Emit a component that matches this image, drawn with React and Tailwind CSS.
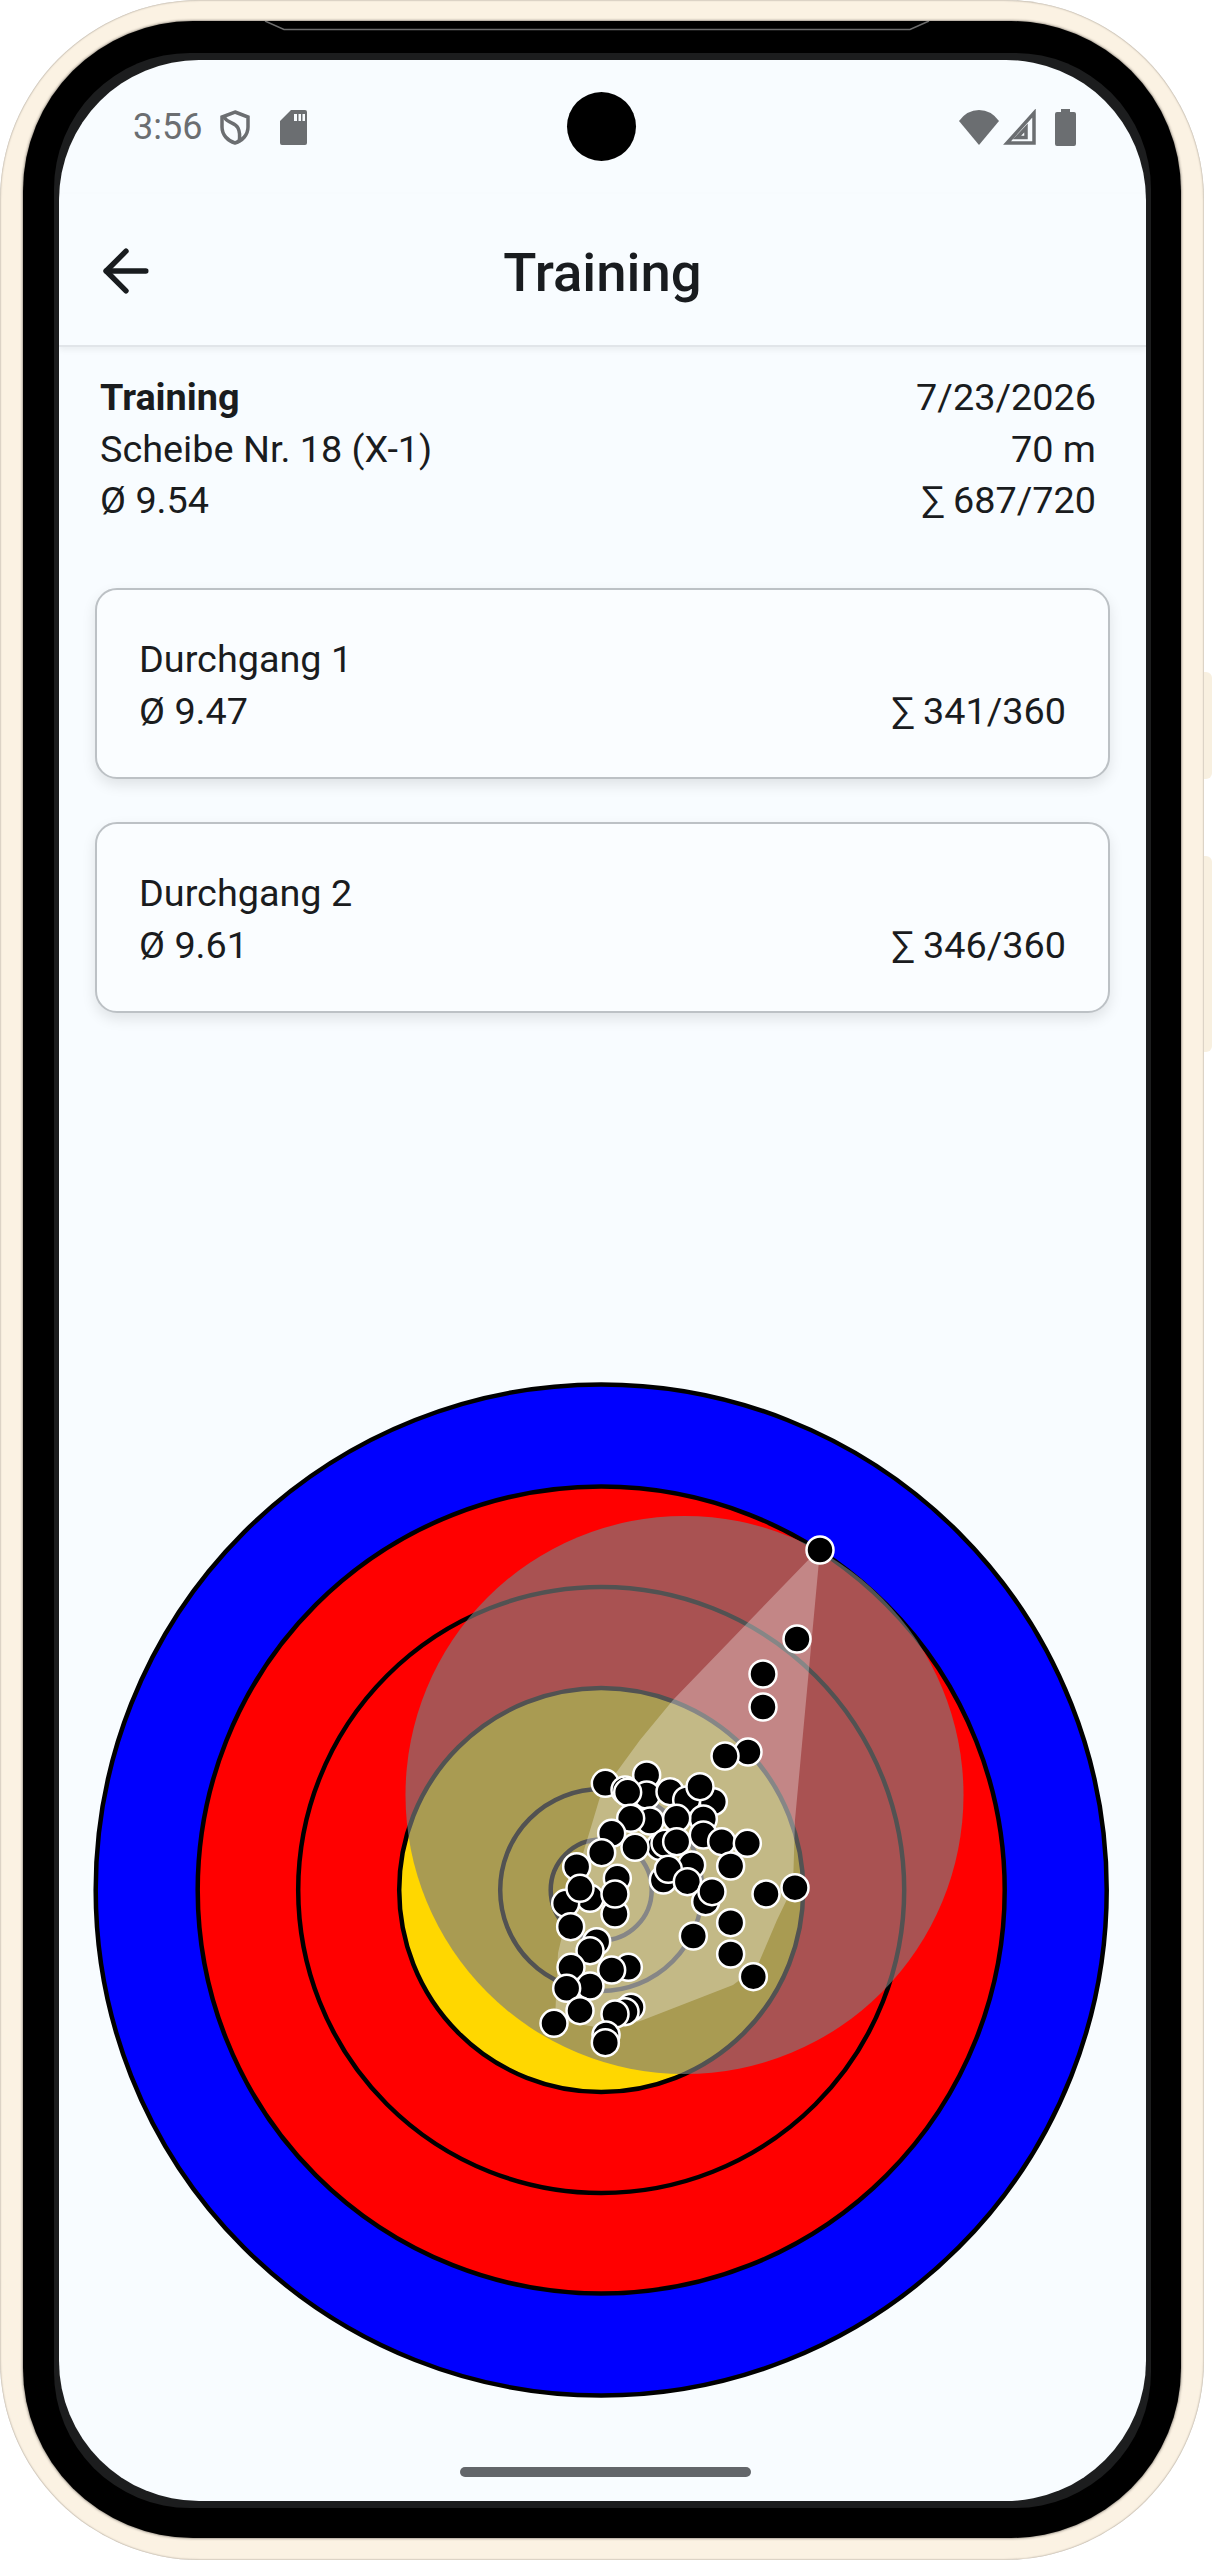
// Training result screen inside a phone frame, with the shot scatter on a target.
import { ArrowLeft } from 'lucide-react';

// Ring radii, outermost first, and the fill of each ring.
const RINGS = [
  { r: 505.5, fill: '#0000ff' },
  { r: 403.5, fill: '#ff0000' },
  { r: 303, fill: '#ff0000' },
  { r: 202, fill: '#ffd700' },
  { r: 101, fill: '#ffd700' },
  { r: 50.5, fill: '#ffd700' },
];

const HULL = '820,1550 795,1820 793,1887 777,1920 757,1967 733,1985 643,2020 613,2030 555,2020 558,1953 577,1873 588,1837 600,1797 613,1777 640,1740 673,1700 815,1553';

// Shots outside the tight group, in page pixels.
const OUTER_SHOTS = [
  [820, 1550], [797, 1639], [763, 1674], [763, 1707], [748, 1752], [725, 1756],
];

// Tight group, read off a 3x crop whose corner sits at 500,1740.
const GROUP_SHOTS = [
  [316, 130], [440, 105], [440, 165], [375, 150], [383, 157], [510, 155], [640, 185], [560, 180], [600, 140],
  [450, 243], [392, 235], [610, 237], [530, 235], [335, 280], [480, 320], [495, 310], [610, 285], [530, 305],
  [405, 322], [665, 305], [742, 310], [305, 338], [575, 375], [692, 378], [490, 420], [505, 388], [562, 425],
  [617, 485], [636, 455], [230, 380], [352, 415], [270, 475], [197, 490], [345, 522], [345, 462], [240, 445],
  [212, 560], [798, 462], [885, 443], [692, 548], [580, 588], [692, 642], [760, 710], [290, 605], [270, 632],
  [213, 682], [385, 682], [335, 690], [270, 738], [200, 745], [240, 812], [393, 802], [375, 815], [345, 822],
  [162, 850], [318, 885], [316, 908],
].map(([x, y]) => [500 + x / 3, 1740 + y / 3]);

function Target() {
  return (
    <svg className="ml-[28px] mt-[362px] block" width="1030" height="1030" viewBox="87 1375 1030 1030">
      {RINGS.map((ring) => (
        <circle key={ring.r} cx="601.2" cy="1890" r={ring.r} fill={ring.fill} stroke="#000" strokeWidth="4.5" />
      ))}
      <circle cx="684.5" cy="1795" r="279" fill="rgb(125 125 125 / 0.66)" />
      <polygon points={HULL} fill="rgb(255 255 255 / 0.3)" strokeLinejoin="round" />
      {[...OUTER_SHOTS, ...GROUP_SHOTS].map(([x, y], i) => (
        <circle key={i} cx={x} cy={y} r="13.5" fill="#000" stroke="#fff" strokeWidth="2.5" />
      ))}
    </svg>
  );
}

function StatusBar() {
  return (
    <div className="relative flex h-[134px] shrink-0 items-center pl-[74px] pr-[70px] text-[#6b6e71]">
      <span className="w-[87px] text-[36px] leading-none">3:56</span>
      <svg width="30" height="35" viewBox="0 0 30 35" fill="none" stroke="currentColor" strokeWidth="3.5">
        <path d="M15 2 L28 7 V17 C28 25 22 31 15 33 C8 31 2 25 2 17 V7 Z" />
        <path d="M4 7 C8 14 15 12 18 18 C20 22 20 27 19 32" />
      </svg>
      <svg className="ml-[30px]" width="27" height="35" viewBox="0 0 27 35">
        <path fill="currentColor" fillRule="evenodd" d="M11 0 H25 Q27 0 27 2 V33 Q27 35 25 35 H2 Q0 35 0 33 V11 Z M14 4 V11 H17 V4 Z M18.5 4 V11 H21 V4 Z M22.5 4 V11 H25 V4 Z" />
      </svg>
      <div className="absolute left-[508px] top-[32px] h-[69px] w-[69px] rounded-full bg-black" />
      <div className="ml-auto flex items-center">
        <svg width="40" height="35" viewBox="0 0 40 35">
          <path fill="currentColor" d="M20 35 L0 11 Q8 0 20 0 Q32 0 40 11 Z" />
        </svg>
        <svg className="ml-[4px]" width="33" height="36" viewBox="0 0 33 36" fill="none" stroke="currentColor">
          <path d="M31 4 V34 H4 Z M23 19 V28.5 H14 Z" strokeWidth="3.5" />
        </svg>
        <svg className="ml-[19px]" width="21" height="37" viewBox="0 0 21 37">
          <path fill="currentColor" d="M6 0 H15 V3 H19 Q21 3 21 5 V35 Q21 37 19 37 H2 Q0 37 0 35 V5 Q0 3 2 3 H6 Z" />
        </svg>
      </div>
    </div>
  );
}

function Header() {
  return (
    <div className="relative flex h-[153px] shrink-0 items-center justify-center border-b-2 border-[#e1e5e9] pt-[5px] text-[#191c1f] shadow-[0_3px_6px_rgba(0,0,0,0.06)]">
      <ArrowLeft className="absolute left-[33px] top-[43px]" size={68} strokeWidth={1.9} />
      <span className="text-[54.5px] font-medium leading-none">Training</span>
    </div>
  );
}

function RunCard({ name, average, sum }) {
  return (
    <div className="flex h-[191px] flex-col justify-center rounded-[22px] border-2 border-[#bcc1c5] bg-[#fafdff] px-[42px] pt-[5px] leading-[51.5px] shadow-[0_6px_14px_rgba(0,0,0,0.1)]">
      <div>{name}</div>
      <div className="flex justify-between">
        <span>{average}</span>
        <span>{sum}</span>
      </div>
    </div>
  );
}

export default function App() {
  return (
    <div className="relative h-[2560px] w-[1212px] bg-white font-['Roboto',sans-serif]">
      <div className="absolute right-0 top-[672px] h-[107px] w-[16px] rounded-r-[6px] bg-[#f8f0e0]" />
      <div className="absolute right-0 top-[856px] h-[196px] w-[16px] rounded-r-[6px] bg-[#f8f0e0]" />

      <div className="relative h-[2560px] w-[1204px] rounded-[200px] bg-[#fbf2e3] px-[23px] pb-[22px] pt-[21px] shadow-[inset_0_0_2px_rgba(90,80,70,0.7)]">
        <div className="relative h-full rounded-[170px] bg-black pb-[30px] pl-[31px] pr-[30px] pt-[32px] shadow-[0_0_3px_rgba(40,35,30,0.8)]">
          <svg className="absolute left-[238px] top-0" width="672" height="10" viewBox="0 0 672 10" fill="none" stroke="#6c6c6c" strokeWidth="1.5">
            <path d="M4 0 L23 8.5 H649 L668 0" />
          </svg>
          <div className="h-full rounded-[136px] bg-[#1c1d1e] pb-[7px] pl-[5px] pr-[5px] pt-[7px]">
            <div className="relative h-full overflow-hidden rounded-[140px] bg-[#f8fcff] text-[37.8px] text-[#1a1c1e]">
              <StatusBar />
              <Header />

              <div className="flex justify-between pb-[61px] pl-[41px] pr-[50px] pt-[25px] leading-[51.5px]">
                <div>
                  <div className="font-bold">Training</div>
                  <div>Scheibe Nr. 18 (X-1)</div>
                  <div>Ø 9.54</div>
                </div>
                <div className="text-right">
                  <div>7/23/2026</div>
                  <div>70 m</div>
                  <div>∑ 687/720</div>
                </div>
              </div>

              <div className="mx-[36px] flex flex-col gap-[43px]">
                <RunCard name="Durchgang 1" average="Ø 9.47" sum="∑ 341/360" />
                <RunCard name="Durchgang 2" average="Ø 9.61" sum="∑ 346/360" />
              </div>

              <Target />

              <div className="absolute bottom-[24px] left-[401px] h-[10px] w-[291px] rounded-full bg-[#63666a]" />
            </div>
          </div>
        </div>
      </div>
    </div>
  );
}
